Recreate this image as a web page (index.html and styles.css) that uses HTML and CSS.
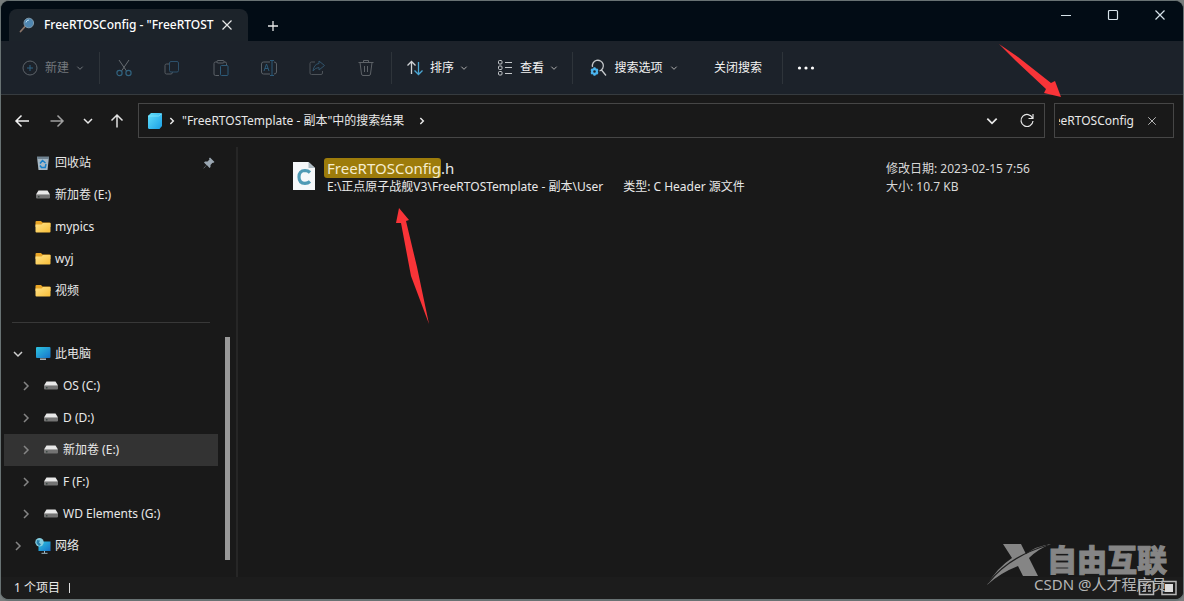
FILE: index.html
```html
<!DOCTYPE html>
<html lang="zh-CN">
<head>
<meta charset="utf-8">
<title>FreeRTOSConfig</title>
<link rel="stylesheet" href="styles.css">
</head>
<body>
<svg class="defs" aria-hidden="true">
  <defs>
    <linearGradient id="gFolder" x1="0" y1="0" x2="1" y2="1"><stop offset="0" stop-color="#ffe48a"/><stop offset="1" stop-color="#f8bd37"/></linearGradient>
    <linearGradient id="gScreen" x1="0" y1="0" x2="1" y2="1"><stop offset="0" stop-color="#2fc5e0"/><stop offset="1" stop-color="#1672c9"/></linearGradient>
    <linearGradient id="gPaper" x1="0" y1="0" x2="1" y2="1"><stop offset="0" stop-color="#62e0fb"/><stop offset="1" stop-color="#1a9fe6"/></linearGradient>
  </defs>
  <symbol id="chevDown" viewBox="0 0 12 12"><path d="M2 4l4 4 4-4" fill="none" stroke="currentColor" stroke-width="1.500"/></symbol>
  <symbol id="chevRight" viewBox="0 0 12 12"><path d="M4 2l4 4-4 4" fill="none" stroke="currentColor" stroke-width="1.500"/></symbol>
  <symbol id="crumbRight" viewBox="0 0 12 12"><path d="M3.500 1.500l4.500 4.500-4.500 4.500" fill="none" stroke="currentColor" stroke-width="2.200"/></symbol>
  <symbol id="cross" viewBox="0 0 12 12"><path d="M1.500 1.500l9 9M10.500 1.500l-9 9" fill="none" stroke="currentColor" stroke-width="1.200"/></symbol>
  <symbol id="drive" viewBox="0 0 16 16"><path d="M3.500 3.500h9L15 7.500H1z" fill="#e8e8e8"/><rect x="1" y="7" width="14" height="4.500" rx="1" fill="#737373"/><path d="M1.500 7.500h13" stroke="#a8a8a8"/><rect x="3" y="9" width="1.500" height="1.500" fill="#3c4a44"/></symbol>
  <symbol id="folder" viewBox="0 0 16 16"><path d="M.5 3Q.5 2 1.500 2H6L7.500 3.500H14.500Q15.500 3.500 15.500 4.500V8H.5z" fill="#e9a526"/><path d="M.5 5.500H6.500L8 4H15.500V12.500Q15.500 13.500 14.500 13.500H1.500Q.5 13.500 .5 12.500z" fill="url(#gFolder)"/></symbol>
</svg>

<div class="window">
  <header class="titlebar">
    <div class="tab">
      <svg class="i16" viewBox="0 0 16 16"><path d="M1.500 14.500l4.500-5" stroke="#8b7468" stroke-width="1.800" stroke-linecap="round"/><circle cx="9.800" cy="6" r="4.800" fill="#4f86b0" stroke="#7f99aa"/><path d="M7 5.500a3 3 0 0 1 3-2.500" stroke="#b8dcf2" fill="none"/></svg>
      <span class="tab-title">FreeRTOSConfig - "FreeRTOST</span>
      <button class="plain" aria-label="关闭标签页"><svg class="i12" viewBox="0 0 12 12"><use href="#cross"/></svg></button>
    </div>
    <button class="plain newtab" aria-label="新建标签页"><svg class="i12" viewBox="0 0 12 12"><path d="M6 1v10M1 6h10" stroke="currentColor" stroke-width="1.300"/></svg></button>
    <div class="caption">
      <button class="plain" aria-label="最小化"><svg class="i12" viewBox="0 0 12 12"><path d="M1 6.500h10" stroke="currentColor"/></svg></button>
      <button class="plain" aria-label="最大化"><svg class="i12" viewBox="0 0 12 12"><rect x="1.500" y="1.500" width="9" height="9" rx="1" fill="none" stroke="currentColor" stroke-width="1.200"/></svg></button>
      <button class="plain" aria-label="关闭"><svg class="i12" viewBox="0 0 12 12"><use href="#cross"/></svg></button>
    </div>
  </header>

  <div class="toolbar">
    <button class="cmd off new" disabled><svg class="i16" viewBox="0 0 16 16" fill="none"><circle cx="8" cy="8" r="7" stroke="#5d6369"/><path d="M8 5v6M5 8h6" stroke="#2f6283"/></svg>新建<svg class="i8" viewBox="0 0 12 12"><use href="#chevDown"/></svg></button>
    <span class="sep"></span>
    <div class="icons">
      <button class="plain" disabled aria-label="剪切"><svg class="i18" viewBox="0 0 18 18" fill="none"><path d="M4 1l7.500 11M14 1L6.500 12" stroke="#666c71"/><circle cx="4.500" cy="14" r="2.600" stroke="#31637f" stroke-width="1.200"/><circle cx="13.500" cy="14" r="2.600" stroke="#31637f" stroke-width="1.200"/></svg></button>
      <button class="plain" disabled aria-label="复制"><svg class="i18" viewBox="0 0 18 18" fill="none"><path d="M6 5H3.500Q2 5 2 6.500V13.500Q2 15 3.500 15H8Q9.500 15 9.500 13" stroke="#575d63"/><rect x="6.500" y="2.500" width="9" height="10.500" rx="1.500" stroke="#2d506a"/></svg></button>
      <button class="plain" disabled aria-label="粘贴"><svg class="i18" viewBox="0 0 18 18" fill="none"><path d="M5 3H3.500Q2 3 2 4.500V15Q2 16.500 3.500 16.500H7M12 3h1Q14.500 3 14.500 4.500V6" stroke="#5b6167"/><rect x="5" y="1.500" width="7" height="2.500" rx="1" stroke="#5b6167"/><rect x="8.500" y="6.500" width="7.500" height="10" rx="1" stroke="#2d5b79"/></svg></button>
      <button class="plain" disabled aria-label="重命名"><svg class="i18" viewBox="0 0 18 18" fill="none"><path d="M10 3H3.500Q1.500 3 1.500 5V13Q1.500 15 3.500 15H10M14 3Q16.500 3 16.500 5V13Q16.500 15 14 15" stroke="#5b6167"/><path d="M10 1.500h4M12 1.500v15M10 16.500h4M4 12l2.500-7L9 12M5 9.500h3" stroke="#2d5b79"/></svg></button>
      <button class="plain" disabled aria-label="共享"><svg class="i18" viewBox="0 0 18 18" fill="none"><path d="M7 3H3.500Q2 3 2 4.500V14Q2 15.500 3.500 15.500H13Q14.500 15.500 14.500 14V12" stroke="#4d5359"/><path d="M11 2l5.500 4.500L11 11V8.500Q7.500 8.500 5 12Q6 5 11 4.500z" stroke="#31546c"/></svg></button>
      <button class="plain" disabled aria-label="删除"><svg class="i18" viewBox="0 0 18 18" fill="none"><path d="M1.500 3.500h15M6.500 3V1.500h5V3M3 3.500L4.500 15Q4.700 16.500 6 16.500H12Q13.300 16.500 13.500 15L15 3.500M7.500 7v6M10.500 7v6" stroke="#5d6267"/></svg></button>
    </div>
    <span class="sep"></span>
    <button class="cmd sort"><svg class="i18" viewBox="0 0 18 18" fill="none" stroke-width="1.300"><path d="M5.500 15V2.500M1.500 6.500l4-4 4 4" stroke="#d0d3d6"/><path d="M12.500 3v12.500M8.500 11.500l4 4 4-4" stroke="#4ba6d3"/></svg>排序<svg class="i8" viewBox="0 0 12 12"><use href="#chevDown"/></svg></button>
    <button class="cmd view"><svg class="i18" viewBox="0 0 18 18" fill="none" stroke="#c5c8cb"><rect x="2.500" y="1.500" width="3.500" height="3.500" rx="1"/><rect x="2.500" y="7" width="3.500" height="3.500" rx="1"/><rect x="2.500" y="12.500" width="3.500" height="3.500" rx="1"/><path d="M9 3.500h7M9 8.500h7M9 14.500h7"/></svg>查看<svg class="i8" viewBox="0 0 12 12"><use href="#chevDown"/></svg></button>
    <span class="sep"></span>
    <button class="cmd options"><svg class="i18" viewBox="0 0 18 18" fill="none"><path d="M3.500 8A5.500 5.500 0 1 1 10.500 12M12.500 11L17 16.500" stroke="#c5c8cb" stroke-width="1.300"/><circle cx="5.500" cy="12.500" r="2.400" stroke="#4bb4ee" stroke-width="2.200"/><path d="M5.500 8.300v2M5.500 14.700v2M2 10.400l1.500.9M7.500 13.700l1.500.9M2 14.600l1.500-.9M7.500 11.300l1.500-.9" stroke="#4bb4ee" stroke-width="2"/></svg>搜索选项<svg class="i8" viewBox="0 0 12 12"><use href="#chevDown"/></svg></button>
    <button class="cmd">关闭搜索</button>
    <span class="sep"></span>
    <button class="cmd more" aria-label="更多"><svg class="i18" viewBox="0 0 18 18" fill="#fff"><circle cx="2.500" cy="9" r="1.600"/><circle cx="9" cy="9" r="1.600"/><circle cx="15.500" cy="9" r="1.600"/></svg></button>
  </div>

  <nav class="navbar">
    <div class="arrows">
      <button class="plain" aria-label="后退"><svg class="i16" viewBox="0 0 16 16"><path d="M15 8H2M7.500 2.500L2 8l5.500 5.500" fill="none" stroke="#f2f2f2" stroke-width="1.500"/></svg></button>
      <button class="plain" aria-label="前进"><svg class="i16" viewBox="0 0 16 16"><path d="M1.500 8H14M8.500 2.500L14 8l-5.500 5.500" fill="none" stroke="#a0a0a0" stroke-width="1.500"/></svg></button>
      <button class="plain" aria-label="最近"><svg class="i12" viewBox="0 0 12 12"><use href="#chevDown"/></svg></button>
      <button class="plain" aria-label="向上"><svg class="i16" viewBox="0 0 16 16"><path d="M8 14.500V2M2.500 7.500L8 2l5.500 5.500" fill="none" stroke="#e2e2e2" stroke-width="1.500"/></svg></button>
    </div>
    <div class="address">
      <svg class="i18" viewBox="0 0 18 18"><path d="M5 1H14.500Q16 1 16 2.500V14L13.500 17H3.500Q2 17 2 15.500V4z" fill="url(#gPaper)"/><path d="M2 4h10.500L16 1.500" fill="none" stroke="#8ceeff" stroke-width=".7"/></svg>
      <svg class="i8 crumb first" viewBox="0 0 12 12"><use href="#crumbRight"/></svg>
      <span class="path">"FreeRTOSTemplate - 副本"中的搜索结果</span>
      <svg class="i8 crumb" viewBox="0 0 12 12"><use href="#crumbRight"/></svg>
      <button class="plain history" aria-label="历史记录"><svg class="i14" viewBox="0 0 12 12"><use href="#chevDown"/></svg></button>
      <button class="plain" aria-label="刷新"><svg class="i16" viewBox="0 0 16 16"><path d="M13.500 5A6 6 0 1 0 14 8M14 1v4.500H9.500" fill="none" stroke="currentColor" stroke-width="1.200"/></svg></button>
    </div>
    <div class="search">
      <input type="text" value="FreeRTOSConfig" aria-label="搜索" dir="rtl">
      <button class="plain" aria-label="清除"><svg class="i10" viewBox="0 0 12 12"><use href="#cross"/></svg></button>
    </div>
  </nav>

  <main class="main">
    <aside class="sidebar">
      <div class="tree">
        <a class="row quick" href="#"><svg class="i16" viewBox="0 0 16 16"><path d="M2 2h12l-1.500 13h-9z" fill="#a7b8c4"/><path d="M2 1.500h12V4H2z" fill="#6f8290"/><path d="M5 8.500l2.500-3 3 2.500M11 9l-.8 3.500H6.500L5 10.500" fill="none" stroke="#167fc9" stroke-width="1.500"/></svg>回收站<svg class="i12 pin" viewBox="0 0 12 12"><path d="M7 .5L11.500 5 10 6 9.500 5.800 7.500 8 7.500 10 6.500 11 3.800 8 .8 11.500 .5 11.200 3.500 8 1 5.500 2 4.500 4.500 4.500 6.500 2.500 6 1.500z" fill="#9ba7b2"/></svg></a>
        <a class="row quick" href="#"><svg class="i16"><use href="#drive"/></svg>新加卷 (E:)</a>
        <a class="row quick" href="#"><svg class="i16"><use href="#folder"/></svg>mypics</a>
        <a class="row quick" href="#"><svg class="i16"><use href="#folder"/></svg>wyj</a>
        <a class="row quick" href="#"><svg class="i16"><use href="#folder"/></svg>视频</a>
        <hr class="divider">
        <a class="row root open" href="#"><svg class="i12 twist"><use href="#chevDown"/></svg><svg class="i16" viewBox="0 0 16 16"><rect x="1" y="1" width="14.500" height="11" rx="1" fill="url(#gScreen)"/><path d="M5 13.200h6" stroke="#b8c2c8" stroke-width="1.400"/></svg>此电脑</a>
        <a class="row child" href="#"><svg class="i12 twist"><use href="#chevRight"/></svg><svg class="i16"><use href="#drive"/></svg>OS (C:)</a>
        <a class="row child" href="#"><svg class="i12 twist"><use href="#chevRight"/></svg><svg class="i16"><use href="#drive"/></svg>D (D:)</a>
        <a class="row child selected" href="#"><svg class="i12 twist"><use href="#chevRight"/></svg><svg class="i16"><use href="#drive"/></svg>新加卷 (E:)</a>
        <a class="row child" href="#"><svg class="i12 twist"><use href="#chevRight"/></svg><svg class="i16"><use href="#drive"/></svg>F (F:)</a>
        <a class="row child" href="#"><svg class="i12 twist"><use href="#chevRight"/></svg><svg class="i16"><use href="#drive"/></svg>WD Elements (G:)</a>
        <a class="row root" href="#"><svg class="i12 twist"><use href="#chevRight"/></svg><svg class="i16" viewBox="0 0 16 16"><rect x="3.500" y="3.500" width="12" height="9.500" fill="url(#gScreen)"/><path d="M9.500 13v2M6.500 15.300h6" stroke="#9eb4bf"/><circle cx="4.500" cy="4.200" r="4.200" fill="#83ccdf"/><path d="M2 2l3 .5-1 2 2 2-2 1.500-2.500-3z" fill="#287faa"/></svg>网络</a>
      </div>
      <div class="scroll"><div class="thumb"></div></div>
    </aside>
    <section class="results">
      <article class="result">
        <svg class="file" viewBox="0 0 22 28"><path d="M0 0H15.500L22 6V28H0z" fill="#f6f8fa"/><path d="M15.500 0v6H22z" fill="#aebbc3"/><path d="M17 10.500Q15 8.500 12 8.500Q6 8.700 6 15T12 21.300Q15 21.300 17 19.500" fill="none" stroke="#4f9ab5" stroke-width="3.200"/></svg>
        <div class="info">
          <div class="name"><mark>FreeRTOSConfig</mark>.h</div>
          <div class="meta"><span>E:\正点原子战舰V3\FreeRTOSTemplate - 副本\User</span><span>类型: C Header 源文件</span></div>
        </div>
        <div class="facts"><div>修改日期: 2023-02-15 7:56</div><div>大小: 10.7 KB</div></div>
      </article>
    </section>
  </main>

  <footer class="status"><span>1 个项目</span><span class="bar"></span></footer>
</div>

<svg class="arrow arrow-search" viewBox="0 0 64 56"><path d="M1 1L20 14 53 40 57 38 63 54 46 50 48 46 18 18z" fill="#f93438"/></svg>
<svg class="arrow arrow-file" viewBox="0 0 34 118"><path d="M2 1L12 13 9 14 20 60 32 117 14 69 4 16 -1 16z" fill="#f93438"/></svg>

<div class="watermark">
  <svg class="wm-logo" viewBox="0 0 66 44"><path d="M17 2H35L40 12Q50 4 65 2 52 7 43 16L52 34H37L32 24Q14 31 1 43 11 26 26 16z" fill="#858585"/><path d="M2 41Q24 14 62 3" fill="none" stroke="#202020" stroke-width="1.300"/></svg>
  <span class="wm-brand">自由互联</span>
  <span class="wm-user">CSDN @人才程序员</span>
  <svg class="wm-views" viewBox="0 0 40 18"><g fill="none" stroke="#b8b8b8" stroke-width="1.500"><rect x="1.500" y="2.500" width="14" height="13"/><path d="M5 6h3M10 6h3M5 9h3M10 9h3M5 12h3M10 12h3"/><rect x="24" y="2.500" width="14" height="13"/></g><rect x="27" y="5" width="8" height="8" fill="#ddd"/></svg>
</div>
</body>
</html>
```
FILE: styles.css
```css
* { box-sizing: border-box; }
body {
  margin: 0;
  background: #777d7d;
  color: #e8e8e8;
  font: 12px/18px "Noto Sans", "Noto Sans CJK SC", sans-serif;
  position: relative;
  overflow: hidden;
}
.defs { position: absolute; width: 0; height: 0; }
svg { flex: none; display: block; }
.i8 { width: 8px; height: 8px; }
.i10 { width: 10px; height: 10px; }
.i12 { width: 12px; height: 12px; }
.i14 { width: 14px; height: 14px; }
.i16 { width: 16px; height: 16px; }
.i18 { width: 18px; height: 18px; }

button {
  font: inherit;
  color: inherit;
  background: none;
  border: 0;
  padding: 0;
}
.plain { display: flex; align-items: center; justify-content: center; }

.window {
  min-height: 100vh;
  display: flex;
  flex-direction: column;
  background: #191919;
  border: 1px solid #687273;
  border-bottom-width: 2px;
  border-radius: 9px;
  overflow: hidden;
}

.titlebar { display: flex; height: 40px; background: #020c15; padding-left: 8px; }
.tab {
  display: flex;
  align-items: center;
  width: 239px;
  margin-top: 8px;
  padding: 0 15px 0 10px;
  background: #1c232a;
  border-radius: 8px 8px 0 0;
}
.tab-title {
  flex: 1;
  margin-left: 9px;
  white-space: nowrap;
  font-weight: 500;
  color: #fff;
}
.newtab { width: 50px; padding-top: 9px; }
.caption { display: flex; margin-left: auto; height: 28px; color: #d7e3ea; }
.caption button { width: 47px; }

.toolbar {
  display: flex;
  align-items: center;
  height: 54px;
  background: #1c222a;
  border-bottom: 1px solid #363b3f;
}
.sep { width: 1px; height: 32px; background: #2e343a; }
.cmd { display: flex; align-items: center; justify-content: center; gap: 7px; color: #f3f3f3; }
.cmd .i8 { color: #b0b0b0; }
.off, .off .i8 { color: #73787d; }
.new { width: 98px; padding-left: 6px; }
.icons { display: flex; width: 291px; padding-right: 1px; }
.icons button { flex: 1; }
.sort, .view { width: 90px; gap: 6px; }
.options { width: 121px; }
.options + .cmd { width: 88px; }
.more { width: 46px; }

.navbar { display: flex; align-items: center; height: 51px; padding-right: 9px; }
.arrows { display: flex; align-items: center; width: 137px; padding-left: 13px; gap: 19px; }
.arrows button:nth-child(3) { margin: 0 -4px 0 -2px; }
.address, .search {
  display: flex;
  align-items: center;
  height: 35px;
  border: 1px solid #464646;
}
.address { flex: 1; padding: 0 9px 0 7px; }
.crumb { margin: 0 14px; }
.crumb.first { margin: 0 6px 0 4px; }
.address .history { margin: 0 20px 0 auto; }
.search { width: 120px; margin-left: 9px; padding: 0 16px 0 4px; justify-content: space-between; color: #b5b5b5; }
.search input {
  width: 75px;
  padding: 0;
  border: 0;
  outline: 0;
  background: none;
  color: #e8e8e8;
  font: inherit;
}

.main { display: flex; flex: 1; padding-top: 1px; }
.sidebar { display: flex; width: 237px; border-right: 2px solid #262626; }
.tree { width: 217px; padding-left: 3px; }
.row {
  display: flex;
  align-items: center;
  gap: 4px;
  height: 32px;
  color: inherit;
  text-decoration: none;
}
.quick { padding-left: 31px; }
.root { padding-left: 8px; }
.child { padding-left: 16px; }
.twist { color: #858585; margin-right: 7px; }
.open .twist { color: #cfcfcf; }
.selected { background: #333; }
.pin { margin: 0 3px 0 auto; }
.divider { margin: 15px 8px; border: 0; border-top: 1px solid #383838; }
.scroll { padding: 190px 0 17px 7px; }
.thumb { width: 5px; height: 100%; background: #999; }

.results { flex: 1; padding: 11px 0 0 55px; }
.result { display: flex; }
.file { width: 22px; height: 28px; margin-top: 4px; }
.info { width: 571px; padding-left: 9px; }
.name { font-size: 15px; line-height: 20px; }
.name mark { background: #9d7c0b; color: #f5edcf; border-radius: 3px; padding: 0 0 0 3px; }
.meta { display: flex; gap: 20px; padding-left: 3px; white-space: nowrap; }
.facts { padding-top: 2px; color: #d8d8d8; white-space: nowrap; }

.status {
  display: flex;
  align-items: center;
  gap: 9px;
  height: 22px;
  padding-left: 13px;
  background: #1c1c1c;
}
.bar { width: 1px; height: 10px; background: #ddd; }

.arrow { position: absolute; }
.arrow-search { left: 998px; top: 43px; width: 64px; height: 56px; }
.arrow-file { left: 397px; top: 207px; width: 34px; height: 118px; overflow: visible; }

.watermark { position: absolute; right: 0; bottom: 0; width: 198px; height: 60px; }
.wm-logo { position: absolute; left: 0; top: 1px; width: 66px; height: 44px; }
.wm-brand {
  position: absolute;
  left: 61px;
  top: 0;
  font: 900 30px/34px "Noto Sans CJK SC", sans-serif;
  color: #858585;
  -webkit-text-stroke: 1px #858585;
  white-space: nowrap;
}
.wm-user {
  position: absolute;
  left: 48px;
  top: 34px;
  font-size: 15px;
  color: #b5b5b5;
  white-space: nowrap;
}
.wm-views { position: absolute; right: 6px; top: 38px; width: 40px; height: 18px; }
```
